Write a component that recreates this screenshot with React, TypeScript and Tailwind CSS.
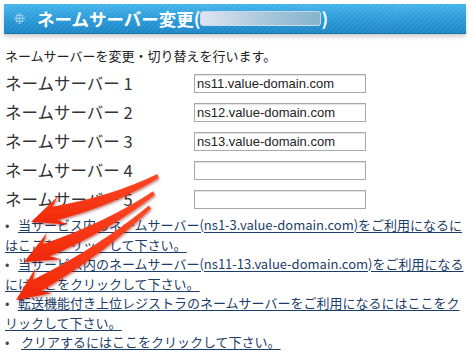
const servers = [
  "ns11.value-domain.com",
  "ns12.value-domain.com",
  "ns13.value-domain.com",
  "",
  "",
];

type Pt = [number, number];

// red annotation arrow, tapered shaft with a slight bow
function arrowPath(tail: Pt, tip: Pt) {
  const dx = tip[0] - tail[0];
  const dy = tip[1] - tail[1];
  const len = Math.hypot(dx, dy);
  const d: Pt = [dx / len, dy / len];
  const n: Pt = [-d[1], d[0]];
  const L = 34;
  const H = 15;
  const w0 = 2;
  const w1 = 7;
  const at = (p: Pt, a: number, b: number): Pt => [
    p[0] + d[0] * a + n[0] * b,
    p[1] + d[1] * a + n[1] * b,
  ];
  const base = at(tip, -L * 0.75, 0);
  const mid = at(tail, (len - L) / 2, -8);
  const f = (p: Pt) => `${p[0].toFixed(1)} ${p[1].toFixed(1)}`;
  return [
    `M ${f(at(tail, 0, w0))}`,
    `Q ${f(at(mid, 0, (w0 + w1) / 2))} ${f(at(base, 0, w1))}`,
    `L ${f(at(tip, -L, H))}`,
    `L ${f(tip)}`,
    `L ${f(at(tip, -L, -H))}`,
    `L ${f(at(base, 0, -w1))}`,
    `Q ${f(at(mid, 0, -(w0 + w1) / 2))} ${f(at(tail, 0, -w0))}`,
    "Z",
  ].join(" ");
}

const arrows: [Pt, Pt][] = [
  [[158, 176], [31, 222]],
  [[154, 193], [24, 262]],
  [[150, 207], [16, 300]],
];

function DotIcon() {
  const dots: Pt[] = [];
  for (let y = -3; y <= 3; y++) {
    for (let x = -3; x <= 3; x++) {
      if (Math.abs(x) + Math.abs(y) <= 4) dots.push([x, y]);
    }
  }
  return (
    <svg width="11" height="11" viewBox="-5.5 -5.5 11 11">
      {dots.map(([x, y], i) => (
        <circle key={i} cx={x * 1.5} cy={y * 1.5} r="0.55" fill="#ffffff" opacity="0.85" />
      ))}
    </svg>
  );
}

export default function App() {
  return (
    <div className="relative w-[470px] h-[353px] overflow-hidden bg-white font-['Noto_Sans_CJK_JP',sans-serif] text-[#222]">
      <div className="mx-[4px] mt-[4px] h-[30px] flex items-center border-b border-[#1670a8] shadow-[0_3px_4px_rgba(0,0,0,0.18)] bg-[image:repeating-linear-gradient(135deg,rgba(255,255,255,0.07)_0_1.5px,transparent_1.5px_3.5px),linear-gradient(to_bottom,#44b4ea,#2898d8_55%,#1c86c6)]">
        <div className="ml-[10px] w-[11px] flex items-center">
          <DotIcon />
        </div>
        <div className="ml-[12px] flex items-center text-white text-[17.5px] font-bold leading-none">
          <span>ネームサーバー変更(</span>
          <span className="w-[121px] h-[15px] rounded-[3px] bg-[linear-gradient(to_right,#dfe4f2,#a8c6da_55%,#86b4ca)] border border-[#c7dbe8]" />
          <span>)</span>
        </div>
      </div>

      <p className="mt-[12px] pl-[5px] text-[13px] leading-[20px] text-[#222]">
        ネームサーバーを変更・切り替えを行います。
      </p>

      <div className="mt-[3px]">
        {servers.map((v, i) => (
          <div key={i} className="h-[29px] flex items-center">
            <div className="w-[194px] pl-[5px] text-[16.5px] text-[#333] leading-none">
              ネームサーバー {i + 1}
            </div>
            <input
              readOnly
              value={v}
              className="w-[172px] h-[19px] border border-[#a9a9a9] shadow-[inset_0_1px_1px_rgba(0,0,0,0.12)] px-[2px] text-[13px] text-[#222] font-['Liberation_Sans',sans-serif] outline-none"
            />
          </div>
        ))}
      </div>

      <div className="mt-[1px] pl-[5px] text-[13px] leading-[19.5px] text-[#1c3d68] whitespace-nowrap">
        <div>
          <span className="inline-block w-[13px] text-[#444]">•</span>
          <a className="underline underline-offset-[2px]">
            当サービス内のネームサーバー(ns1-3.value-domain.com)をご利用になるに
            <br />
            はここをクリックして下さい。
          </a>
        </div>
        <div>
          <span className="inline-block w-[13px] text-[#444]">•</span>
          <a className="underline underline-offset-[2px]">
            当サービス内のネームサーバー(ns11-13.value-domain.com)をご利用になる
            <br />
            にはここをクリックして下さい。
          </a>
        </div>
        <div>
          <span className="inline-block w-[13px] text-[#444]">•</span>
          <a className="underline underline-offset-[2px]">
            転送機能付き上位レジストラのネームサーバーをご利用になるにはここをク
            <br />
            リックして下さい。
          </a>
        </div>
        <div>
          <span className="inline-block w-[16px] text-[#444]">•</span>
          <a className="underline underline-offset-[2px]">クリアするにはここをクリックして下さい。</a>
        </div>
      </div>

      <svg className="absolute inset-0 pointer-events-none" width="470" height="353">
        <defs>
          <filter id="sh" x="-20%" y="-20%" width="140%" height="140%">
            <feDropShadow dx="1" dy="1.5" stdDeviation="1.2" floodColor="#7a1000" floodOpacity="0.45" />
          </filter>
          <linearGradient id="rg" x1="0" y1="0" x2="0" y2="1">
            <stop offset="0" stopColor="#ff4a26" />
            <stop offset="1" stopColor="#f02808" />
          </linearGradient>
        </defs>
        {arrows.map(([t, p], i) => (
          <path key={i} d={arrowPath(t, p)} fill="url(#rg)" filter="url(#sh)" />
        ))}
      </svg>
    </div>
  );
}
